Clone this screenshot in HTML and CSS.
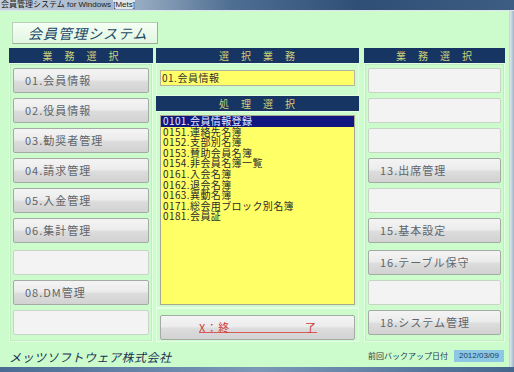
FILE: index.html
```html
<!DOCTYPE html>
<html lang="ja">
<head>
<meta charset="utf-8">
<link rel="stylesheet" href="styles.css">
</head>
<body>
<div class="window">
  <div class="titlebar"><span class="tb-text">会員管理システム for Windows <span class="tb-box">[Mets]</span></span></div>
  <div class="client">
    <div class="content">
      <div class="apptitle">会員管理システム</div>
      <div class="columns">
        <div class="col col-left">
          <div class="head">業　務　選　択</div>
          <div class="panel">
            <div class="btn">01.会員情報</div>
            <div class="btn">02.役員情報</div>
            <div class="btn">03.勧奨者管理</div>
            <div class="btn">04.請求管理</div>
            <div class="btn">05.入金管理</div>
            <div class="btn">06.集計管理</div>
            <div class="btn empty"></div>
            <div class="btn">08.DM管理</div>
            <div class="btn empty"></div>
          </div>
        </div>
        <div class="col col-mid">
          <div class="head">選　択　業　務</div>
          <div class="fieldwrap"><div class="field">01.会員情報</div></div>
          <div class="head head2">処　理　選　択</div>
          <div class="listwrap">
            <ul class="list">
              <li class="sel">0101.会員情報登録</li>
              <li>0151.連絡先名簿</li>
              <li>0152.支部別名簿</li>
              <li>0153.賛助会員名簿</li>
              <li>0154.非会員名簿一覧</li>
              <li>0161.入会名簿</li>
              <li>0162.退会名簿</li>
              <li>0163.異動名簿</li>
              <li>0171.総会用ブロック別名簿</li>
              <li>0181.会員証</li>
            </ul>
          </div>
          <div class="endwrap"><div class="btn endbtn"><span class="endtxt">X：終</span><span class="endtxt">了</span></div></div>
        </div>
        <div class="col col-right">
          <div class="head">業　務　選　択</div>
          <div class="panel">
            <div class="btn empty"></div>
            <div class="btn empty"></div>
            <div class="btn empty"></div>
            <div class="btn">13.出席管理</div>
            <div class="btn empty"></div>
            <div class="btn">15.基本設定</div>
            <div class="btn">16.テーブル保守</div>
            <div class="btn empty"></div>
            <div class="btn">18.システム管理</div>
          </div>
        </div>
      </div>
      <div class="footer">
        <span class="company">メッツソフトウェア株式会社</span>
        <span class="backup"><span class="blabel">前回バックアップ日付</span><span class="bdate">2012/03/09</span></span>
      </div>
    </div>
    <div class="rborder"></div>
  </div>
  <div class="bborder"></div>
</div>
</body>
</html>
```

FILE: styles.css
```css
* { box-sizing: border-box; }
html, body { margin: 0; padding: 0; }
body {
  width: 514px;
  height: 372px;
  overflow: hidden;
  font-family: "Noto Sans CJK JP", "DejaVu Sans", sans-serif;
  background: #ccfccc;
}
.window { width: 514px; height: 372px; display: flex; flex-direction: column; }
.titlebar {
  height: 11px;
  background: linear-gradient(90deg, #c4d0dc 0%, #9fb2c6 25%, #4e6e92 45%, #2f4f76 70%, #3d5d82 100%);
  border-bottom: 1px solid #dde6ee;
  display: flex;
  align-items: center;
  padding-left: 1px;
  overflow: hidden;
}
.tb-text { font-family: "Liberation Sans", "Noto Sans CJK JP", sans-serif; font-size: 8px; line-height: 9px; color: #1a1a1a; white-space: nowrap; margin-top: -2px; }
.tb-box { background: #dfe6ee; }
.client { flex: 1; display: flex; min-height: 0; }
.content { flex: 1; display: flex; flex-direction: column; padding: 11px 0 0 9px; }
.rborder { width: 5px; background: linear-gradient(90deg, #dfe8ee, #9fb3c6); border-left: 1px solid #c8d4de; }
.bborder { height: 5px; background: linear-gradient(90deg, #4a6c94, #7b98b8 50%, #44668e); }
.apptitle {
  margin-left: 3px;
  width: 146px;
  height: 22px;
  border: 1px solid #b8d0b8;
  border-right-color: #98b098;
  border-bottom-color: #98b098;
  background: linear-gradient(#f4fff4, #e2f6e2);
  font-style: italic;
  font-size: 14px;
  line-height: 20px;
  color: #1d4a66;
  padding-left: 15px;
  letter-spacing: 1px;
}
.columns { display: flex; margin-top: 4px; height: 294px; }
.col { display: flex; flex-direction: column; }
.col-left { width: 144px; }
.col-mid { width: 203px; margin-left: 3px; }
.col-right { width: 141px; margin-left: 5px; }
.head {
  height: 15px;
  background: #173563;
  color: #d0d078;
  font-size: 10px;
  line-height: 15px;
  text-align: center;
  letter-spacing: 1px;
}
.panel {
  flex: 1;
  border: 1px solid #e4ffe4;
  box-shadow: inset 0 0 0 1px #c0ecc0;
  padding: 4px 3px 0 3px;
  display: flex;
  flex-direction: column;
  gap: 5px;
}
.btn {
  height: 25px;
  border: 1px solid #a4aaa4;
  border-radius: 2px;
  background: linear-gradient(#f4f4f4 0%, #ececec 45%, #dcdcdc 55%, #d2d2d2 100%);
  font-size: 11px;
  line-height: 23px;
  color: #5e666c;
  padding-left: 11px;
  letter-spacing: 1px;
  white-space: nowrap;
}
.btn.empty { background: #f3f3f3; border-color: #c8d4c8; }
.col-left .btn:nth-child(7) { margin-top: 2px; }
.col-right .btn:nth-child(7) { margin-top: 2px; }
.fieldwrap { height: 33px; border: 1px solid #e4ffe4; padding: 6px 3px 0 3px; }
.field {
  height: 16px;
  background: #ffff66;
  border: 1px solid #b4b4a0;
  font-size: 10px;
  line-height: 14px;
  color: #333;
  padding-left: 1px;
  letter-spacing: 0.5px;
}
.listwrap { height: 197px; border: 1px solid #e4ffe4; padding: 3px 3px 2px 3px; }
.list {
  list-style: none;
  margin: 0;
  padding: 0;
  height: 190px;
  background: #ffff66;
  border: 1px solid #a8a890;
  font-size: 10px;
  line-height: 10.6px;
  color: #2a2a2a;
  letter-spacing: 0.4px;
}
.list li { padding-left: 2px; height: 10.6px; white-space: nowrap; }
.list li.sel { background: #101880; color: #e8e8ff; }
.endwrap { flex: 1; border: 1px solid #e4ffe4; padding: 6px 3px 0 3px; }
.endbtn {
  display: flex;
  justify-content: space-between;
  padding: 0 37px 0 38px;
  color: #d03838;
  background-image: linear-gradient(#d85a5a, #d85a5a), linear-gradient(#f4f4f4 0%, #ececec 45%, #dcdcdc 55%, #d2d2d2 100%);
  background-size: 118px 1px, 100% 100%;
  background-position: 38px 16px, 0 0;
  background-repeat: no-repeat;
}
.endtxt { color: #d03838; }
.footer { display: flex; justify-content: space-between; align-items: center; height: 25px; padding-right: 5px; }
.company { font-style: italic; font-size: 12px; color: #1a3050; letter-spacing: 0.5px; margin-top: 4px; }
.backup { display: flex; align-items: center; gap: 6px; margin-top: 2px; }
.blabel { font-size: 8px; color: #2a3a4a; }
.bdate { background: #8cc8e4; color: #1a3a6a; font-family: "Liberation Sans", sans-serif; font-size: 8px; line-height: 12px; padding: 0 4px; width: 50px; text-align: center; }
```
